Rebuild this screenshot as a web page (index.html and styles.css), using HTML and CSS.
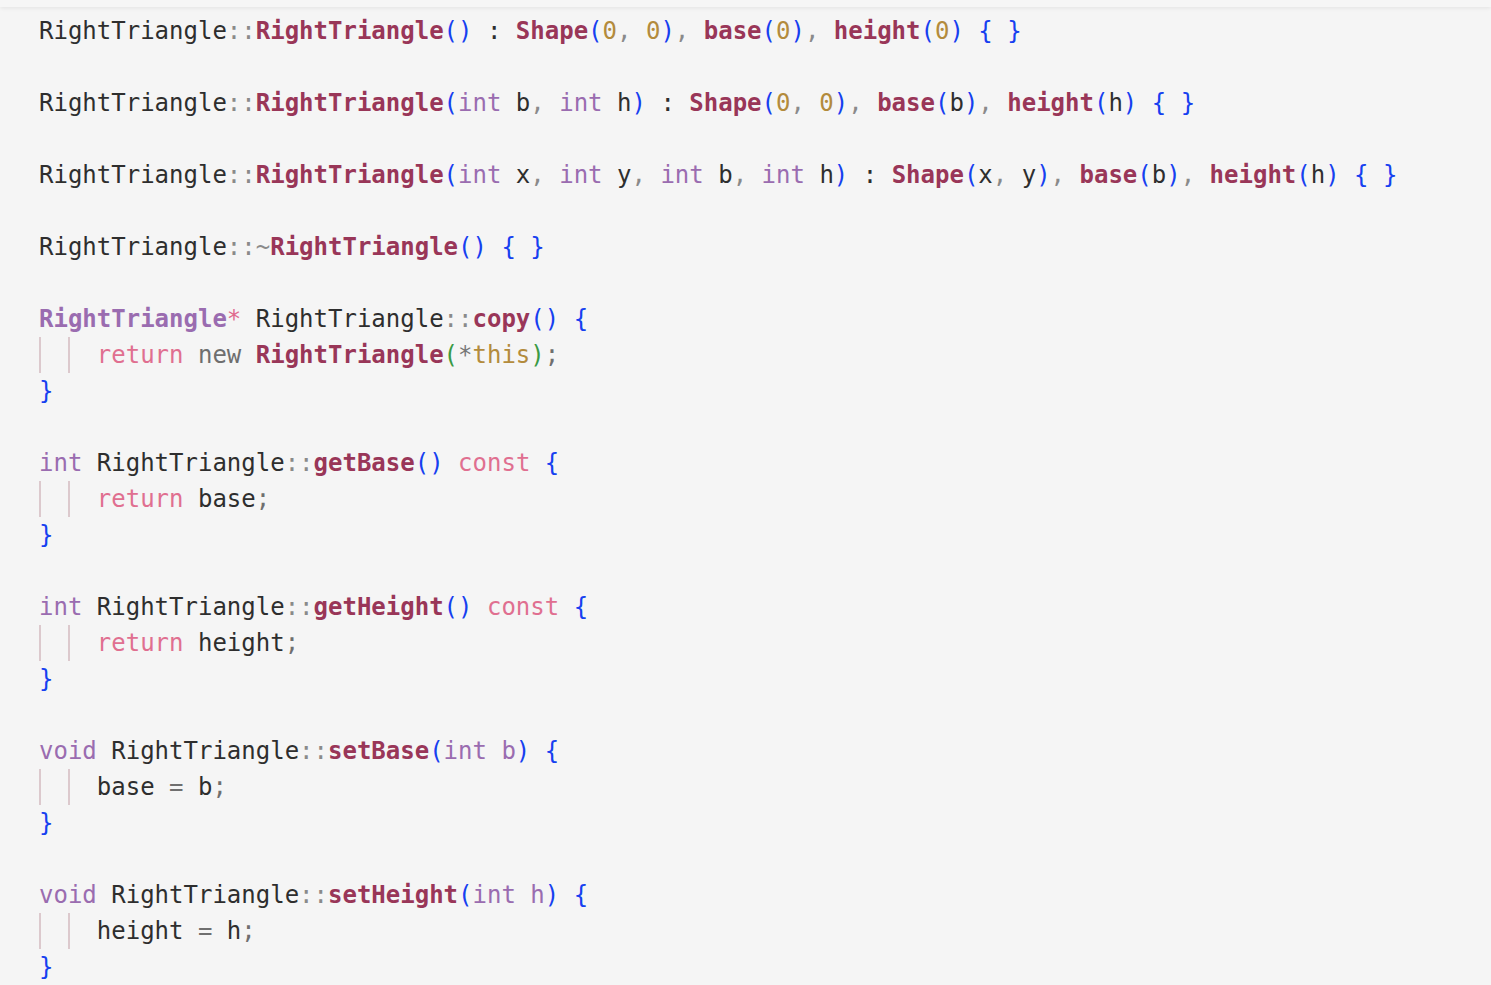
FILE: index.html
```html
<!DOCTYPE html>
<html>
<head>
<meta charset="utf-8">
<link rel="stylesheet" href="styles.css">
</head>
<body>
<div class="topbar"></div>
<div class="code">
<div class="line"><span class="id">RightTriangle</span><span class="p">::</span><span class="fn">RightTriangle</span><span class="br">()</span> <span class="id">:</span> <span class="fn">Shape</span><span class="br">(</span><span class="num">0</span><span class="p">,</span> <span class="num">0</span><span class="br">)</span><span class="p">,</span> <span class="fn">base</span><span class="br">(</span><span class="num">0</span><span class="br">)</span><span class="p">,</span> <span class="fn">height</span><span class="br">(</span><span class="num">0</span><span class="br">)</span> <span class="br">{ }</span></div>
<div class="line"></div>
<div class="line"><span class="id">RightTriangle</span><span class="p">::</span><span class="fn">RightTriangle</span><span class="br">(</span><span class="ty">int</span> <span class="id">b</span><span class="p">,</span> <span class="ty">int</span> <span class="id">h</span><span class="br">)</span> <span class="id">:</span> <span class="fn">Shape</span><span class="br">(</span><span class="num">0</span><span class="p">,</span> <span class="num">0</span><span class="br">)</span><span class="p">,</span> <span class="fn">base</span><span class="br">(</span><span class="id">b</span><span class="br">)</span><span class="p">,</span> <span class="fn">height</span><span class="br">(</span><span class="id">h</span><span class="br">)</span> <span class="br">{ }</span></div>
<div class="line"></div>
<div class="line"><span class="id">RightTriangle</span><span class="p">::</span><span class="fn">RightTriangle</span><span class="br">(</span><span class="ty">int</span> <span class="id">x</span><span class="p">,</span> <span class="ty">int</span> <span class="id">y</span><span class="p">,</span> <span class="ty">int</span> <span class="id">b</span><span class="p">,</span> <span class="ty">int</span> <span class="id">h</span><span class="br">)</span> <span class="id">:</span> <span class="fn">Shape</span><span class="br">(</span><span class="id">x</span><span class="p">,</span> <span class="id">y</span><span class="br">)</span><span class="p">,</span> <span class="fn">base</span><span class="br">(</span><span class="id">b</span><span class="br">)</span><span class="p">,</span> <span class="fn">height</span><span class="br">(</span><span class="id">h</span><span class="br">)</span> <span class="br">{ }</span></div>
<div class="line"></div>
<div class="line"><span class="id">RightTriangle</span><span class="p">::~</span><span class="fn">RightTriangle</span><span class="br">()</span> <span class="br">{ }</span></div>
<div class="line"></div>
<div class="line"><span class="tyb">RightTriangle</span><span class="star">*</span> <span class="id">RightTriangle</span><span class="p">::</span><span class="fn">copy</span><span class="br">()</span> <span class="br">{</span></div>
<div class="line"><span class="guide"></span><span class="guide"></span><span class="kw">return</span> <span class="nw">new</span> <span class="fn">RightTriangle</span><span class="gr">(</span><span class="op">*</span><span class="num">this</span><span class="gr">)</span><span class="sc">;</span></div>
<div class="line"><span class="br">}</span></div>
<div class="line"></div>
<div class="line"><span class="ty">int</span> <span class="id">RightTriangle</span><span class="p">::</span><span class="fn">getBase</span><span class="br">()</span> <span class="kw">const</span> <span class="br">{</span></div>
<div class="line"><span class="guide"></span><span class="guide"></span><span class="kw">return</span> <span class="id">base</span><span class="sc">;</span></div>
<div class="line"><span class="br">}</span></div>
<div class="line"></div>
<div class="line"><span class="ty">int</span> <span class="id">RightTriangle</span><span class="p">::</span><span class="fn">getHeight</span><span class="br">()</span> <span class="kw">const</span> <span class="br">{</span></div>
<div class="line"><span class="guide"></span><span class="guide"></span><span class="kw">return</span> <span class="id">height</span><span class="sc">;</span></div>
<div class="line"><span class="br">}</span></div>
<div class="line"></div>
<div class="line"><span class="ty">void</span> <span class="id">RightTriangle</span><span class="p">::</span><span class="fn">setBase</span><span class="br">(</span><span class="ty">int b</span><span class="br">)</span> <span class="br">{</span></div>
<div class="line"><span class="guide"></span><span class="guide"></span><span class="id">base</span> <span class="sc">=</span> <span class="id">b</span><span class="sc">;</span></div>
<div class="line"><span class="br">}</span></div>
<div class="line"></div>
<div class="line"><span class="ty">void</span> <span class="id">RightTriangle</span><span class="p">::</span><span class="fn">setHeight</span><span class="br">(</span><span class="ty">int h</span><span class="br">)</span> <span class="br">{</span></div>
<div class="line"><span class="guide"></span><span class="guide"></span><span class="id">height</span> <span class="sc">=</span> <span class="id">h</span><span class="sc">;</span></div>
<div class="line"><span class="br">}</span></div>
</div>
</body>
</html>
```
FILE: styles.css
```css
html, body {
  margin: 0;
  padding: 0;
  background: #f5f5f5;
  overflow: hidden;
}
.topbar {
  height: 7px;
  background: #f6f6f6;
  box-shadow: 0 1px 4px rgba(0, 0, 0, 0.08);
  position: relative;
  z-index: 1;
}
.code {
  padding: 6px 0 0 39px;
  font-family: "DejaVu Sans Mono", monospace;
  font-size: 24px;
  line-height: 36px;
  color: #2e2e2e;
}
.line {
  display: block;
  height: 36px;
  white-space: pre;
}
.guide {
  display: inline-block;
  width: 2px;
  height: 36px;
  vertical-align: top;
  background: #dcc9cd;
  margin-right: 26.9px;
}
.id { color: #2e2e2e; }
.p { color: #8a8a8a; }
.sc { color: #6f6f6f; }
.fn { color: #993658; font-weight: bold; }
.br { color: #1640f0; }
.num { color: #b38b3c; }
.ty { color: #9a6cb0; }
.tyb { color: #9a6cb0; font-weight: bold; }
.star { color: #e06a8e; }
.kw { color: #e06f90; }
.nw { color: #6e6e6e; }
.gr { color: #3a9a44; }
.op { color: #777777; }
```
